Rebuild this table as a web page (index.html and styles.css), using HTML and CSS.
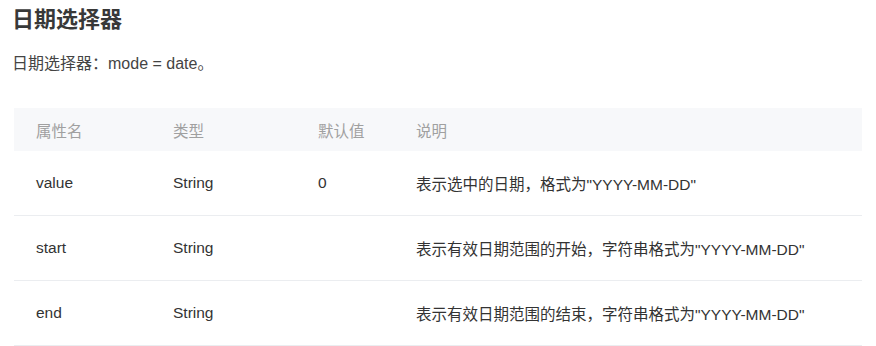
FILE: index.html
```html
<!DOCTYPE html>
<html lang="zh-CN">
<head>
<meta charset="utf-8">
<title>日期选择器</title>
<link rel="stylesheet" href="styles.css">
</head>
<body>
<div class="page">
  <h1 class="title">日期选择器</h1>
  <p class="desc">日期选择器<span class="colon">：</span>mode = date。</p>
  <table class="props">
    <colgroup>
      <col class="c1"><col class="c2"><col class="c3"><col class="c4">
    </colgroup>
    <thead>
      <tr><th>属性名</th><th>类型</th><th>默认值</th><th>说明</th></tr>
    </thead>
    <tbody>
      <tr><td>value</td><td>String</td><td>0</td><td>表示选中的日期，格式为"YYYY-MM-DD"</td></tr>
      <tr><td>start</td><td>String</td><td></td><td>表示有效日期范围的开始，字符串格式为"YYYY-MM-DD"</td></tr>
      <tr><td>end</td><td>String</td><td></td><td>表示有效日期范围的结束，字符串格式为"YYYY-MM-DD"</td></tr>
    </tbody>
  </table>
</div>
</body>
</html>
```

FILE: styles.css
```css
html, body {
  margin: 0;
  padding: 0;
  background: #ffffff;
}
.page {
  padding: 0 12px;
  font-family: "Liberation Sans", Arial, "Noto Sans CJK SC", sans-serif;
  color: #333333;
}
.title {
  margin: 5px 0 0;
  font-size: 22px;
  line-height: 30px;
  font-weight: bold;
  color: #383838;
}
.desc {
  margin: 17px 0 0;
  height: 24px;
  font-size: 16px;
  line-height: 24px;
  color: #444444;
}
.colon {
  font-family: "Noto Sans CJK JP", sans-serif;
  line-height: 16px;
}
.props {
  margin: 32px 0 0 2px;
  width: 848px;
  border-collapse: collapse;
  table-layout: fixed;
  font-size: 15.5px;
}
.c1 { width: 137px; }
.c2 { width: 145px; }
.c3 { width: 98px; }
.c4 { width: 468px; }
.props th {
  height: 43px;
  padding: 0 0 0 22px;
  text-align: left;
  font-weight: normal;
  color: #a0a0a0;
  background: #f7f8fa;
}
.props td {
  height: 64px;
  padding: 0 0 0 22px;
  color: #333333;
  border-bottom: 1px solid #ebedf0;
}
```
